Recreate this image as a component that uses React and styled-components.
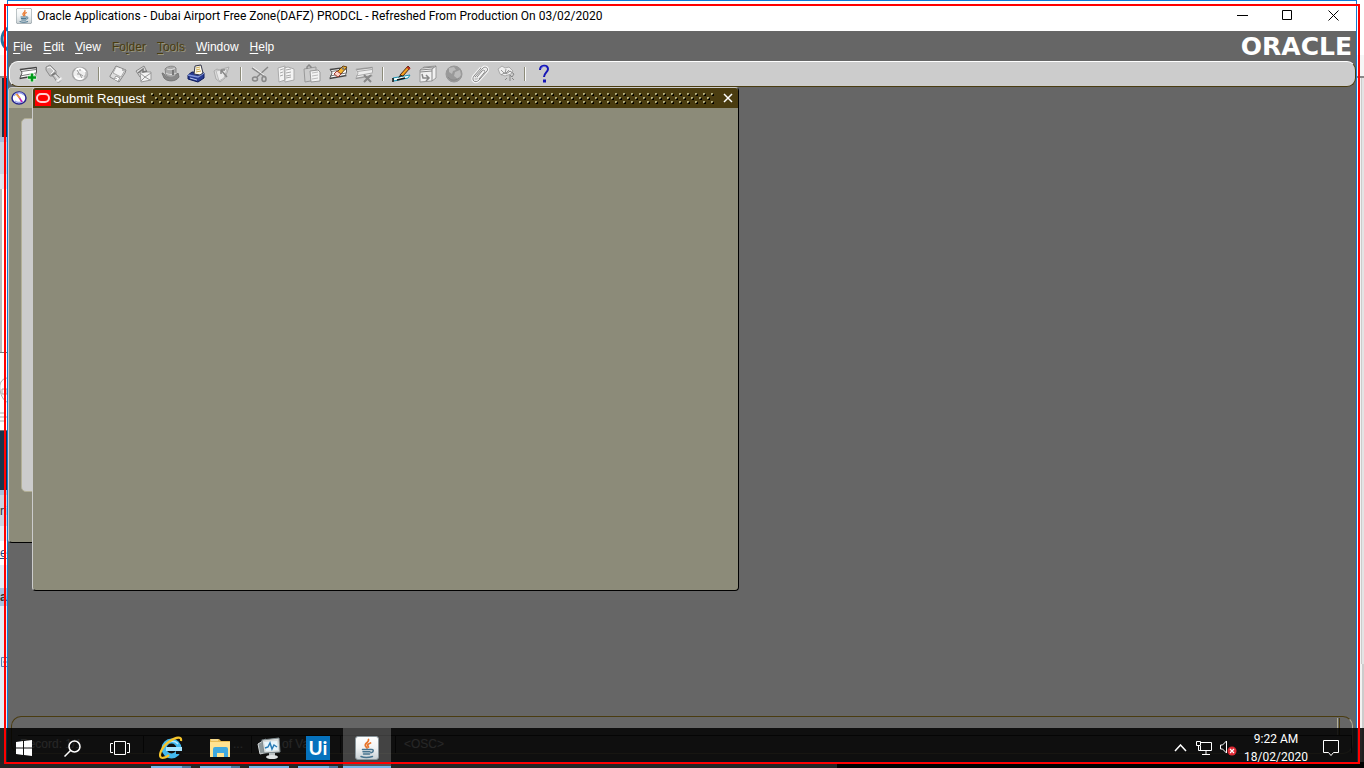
import React from "react";
import styled, { createGlobalStyle, css } from "styled-components";

const ui = '"Liberation Sans", Arial, sans-serif';
const system = 'Roboto, "Noto Sans", sans-serif';
const olive = "#4a3c10";

const GlobalStyle = createGlobalStyle`
  *, *::before, *::after { box-sizing: border-box; }
  body { margin: 0; overflow: hidden; background: #fff; font-family: ${ui}; }
  button { margin: 0; padding: 0; border: 0; background: none; font: inherit; color: inherit; }
  svg { display: block; flex: none; }
`;

const Desktop = styled.div`
  position: relative;
  display: grid;
  grid-template-columns: 7px minmax(0, 1fr) 7px;
  grid-template-rows: minmax(0, 1fr) 6px;
  height: 100vh;
  overflow: hidden;
`;

const Strip = styled.div`
  display: flex;
  flex-direction: column;
  overflow: hidden;
  background: #e4edf6;
`;

const Band = styled.div`
  flex: ${(p) => (p.$h ? `0 0 ${p.$h}px` : "1 1 0")};
  display: flex;
  align-items: center;
  overflow: hidden;
  background: ${(p) => p.$bg};
  color: ${(p) => p.$color || "#333"};
  font-size: 12px;
  line-height: 16px;
  white-space: nowrap;
  a { color: #1f4a80; }
`;

const PageFoot = styled.div`
  grid-column: 1 / -1;
  display: grid;
  grid-template-columns: 837fr 527fr;
  background: #000;
  &::before { content: ""; background: #f4f4f4; }
`;

const AppWindow = styled.main`
  display: flex;
  flex-direction: column;
  min-width: 0;
  border: 1px solid #0f7ad8;
  background: #666;
`;

const TitleBar = styled.header`
  flex: 0 0 30px;
  display: flex;
  align-items: center;
  padding-left: 8px;
  background: #fff;
`;

const TitleText = styled.h1`
  flex: 1;
  margin: 0 0 0 5px;
  font: 400 12px/16px ${system};
  color: #000;
  white-space: nowrap;
`;

const CaptionButton = styled.button`
  display: flex;
  align-items: center;
  justify-content: center;
  width: ${(p) => (p.$narrow ? 45 : 46)}px;
  height: 28px;
  align-self: flex-start;
`;

const MenuBar = styled.nav`
  flex: 0 0 30px;
  display: flex;
  align-items: center;
  padding: 2px 4px 0 5px;
`;

const MenuItem = styled.button`
  margin-right: 11px;
  font-size: 12px;
  line-height: 16px;
  color: #fff;
  u { text-underline-offset: 2px; }
  ${(p) =>
    p.$disabled &&
    css`
      color: ${olive};
      text-shadow: 1px 1px 0 #99957a;
    `}
`;

const Brand = styled.div`
  margin-left: auto;
  font: 700 25px/26px "DejaVu Sans", sans-serif;
  color: #fff;
`;

const ToolBar = styled.div`
  flex: 0 0 26px;
  display: flex;
  align-items: center;
  margin: 0 0 0 1px;
  padding-left: 5px;
  background: #ccc;
  border: 1px solid;
  border-color: #fff ${olive} ${olive} #fff;
  border-radius: 9px;
`;

const ToolButton = styled.button`
  display: flex;
  justify-content: center;
  width: 26px;
  height: 20px;
`;

const ToolDivider = styled.span`
  width: 2px;
  height: 14px;
  margin: 0 5px;
  background: linear-gradient(90deg, #8c8b79 50%, #f8f8f8 50%);
`;

const Canvas = styled.section`
  position: relative;
  flex: 1 1 0;
  min-height: 0;
  overflow: hidden;
`;

const FormWindow = styled.article`
  position: absolute;
  left: ${(p) => p.$left}px;
  top: 0;
  width: ${(p) => p.$width}px;
  height: ${(p) => p.$height}px;
  display: flex;
  flex-direction: column;
  overflow: hidden;
  background: #8c8b79;
  border: 1px solid;
  border-color: #ccc #000 #000 #ccc;
  border-radius: 4px;
`;

const FormHeader = styled.header`
  flex: 0 0 20px;
  display: flex;
  align-items: center;
  padding-left: 2px;
  background: ${(p) => (p.$active ? olive : "#b2af96")};
  color: #fff;
`;

const FormTitle = styled.h2`
  margin: 0 5px 0 2px;
  padding-top: 2px;
  font: 400 13px/18px ${ui};
  white-space: nowrap;
`;

const Grip = styled.svg`
  flex: 1 1 0;
  width: 0;
  height: 12px;
  margin-right: 4px;
`;

const CloseButton = styled.button`
  width: 20px;
  height: 20px;
  display: flex;
  align-items: center;
  justify-content: center;
`;

const NavPanel = styled.div`
  height: 374px;
  margin: 10px 0 0 12px;
  background: #ccc;
  border: 1px solid #b2af96;
  border-radius: 5px;
`;

const StatusBar = styled.footer`
  flex: 0 0 38px;
  display: flex;
  flex-direction: column;
  margin: 0 3px 7px;
  border: 1px solid;
  border-color: ${olive} #b2af96 #99957a ${olive};
  border-radius: 10px;
`;

const MessageLine = styled.div`
  flex: 0 0 19px;
  margin-left: 6px;
  border-bottom: 1px solid #222;
  display: flex;
  justify-content: flex-end;
  padding: 1px 12px 0 0;
  &::after {
    content: "";
    width: 3px;
    background: linear-gradient(90deg, #b2af96 1px, #666 1px 2px, ${olive} 2px);
  }
`;

const StatusFields = styled.div`
  flex: 1;
  display: grid;
  grid-template-columns: 132px 108px 89px 55px 1fr;
  font-size: 12px;
  line-height: 17px;
  color: #fff;
`;

const StatusField = styled.span`
  padding: 0 8px;
  text-align: ${(p) => (p.$end ? "right" : "left")};
  border-right: 1px solid #222;
  white-space: nowrap;
  overflow: hidden;
`;

const TaskBar = styled.footer`
  position: absolute;
  left: 0;
  right: 0;
  bottom: 0;
  display: flex;
  height: 40px;
  background: rgba(0, 0, 0, 0.85);
  color: #fff;
`;

const TaskButton = styled.button`
  position: relative;
  display: flex;
  align-items: center;
  justify-content: center;
  width: 48px;
  height: 40px;
  margin-right: ${(p) => (p.$app ? 1 : 0)}px;
  background: ${(p) => (p.$active ? "rgba(255,255,255,.22)" : "transparent")};
  ${(p) =>
    p.$line &&
    css`
      &::after {
        content: "";
        position: absolute;
        bottom: 0;
        left: ${p.$active ? 0 : 4}px;
        right: ${p.$active ? 0 : 4}px;
        height: 2px;
        background: ${p.$stack
          ? "linear-gradient(90deg, #76b9ed 31px, #4c7ba3 31px)"
          : "#76b9ed"};
      }
    `}
`;

const TaskApps = styled.div`
  display: flex;
  margin-left: 3px;
`;

const Tray = styled.div`
  display: flex;
  align-items: stretch;
  margin-left: auto;
`;

const TrayButton = styled.button`
  display: flex;
  align-items: center;
  justify-content: center;
  width: ${(p) => p.$w || 24}px;
`;

const Clock = styled.button`
  width: 72px;
  padding-bottom: 1px;
  font: 400 12px/18px ${system};
  text-align: center;
  white-space: nowrap;
  time { display: block; }
`;

const Outline = styled.div`
  position: absolute;
  inset: 4px;
  border: 2px solid #f00;
  pointer-events: none;
`;

function Java({ size }) {
  return (
    <svg width={size} height={size} viewBox="0 0 24 24">
      <defs>
        <linearGradient id="tile" x1="0" y1="0" x2="0" y2="1">
          <stop offset="0" stopColor="#fff" />
          <stop offset=".5" stopColor="#f0f3f4" />
          <stop offset="1" stopColor="#c8d0d4" />
        </linearGradient>
      </defs>
      <rect x=".5" y=".5" width="23" height="23" rx="2.5" fill="url(#tile)" stroke="#8b979d" />
      <g fill="none" strokeLinecap="round">
        <path d="M13.500 3.500c1 3-4.500 3.500-3 6.500l1.500 2M15.500 7c-3 1-3.500 2.300-2 4" stroke="#e8762c" strokeWidth="1.800" />
        <path d="M7.500 13.500h8M8 15.800h7M8.500 18h6M6 20.500c4 1.500 8 1 11.500 0M16 13.500c3-.5 3 2.500 0 3.300" stroke="#47748f" strokeWidth="1.500" />
      </g>
    </svg>
  );
}

const Svg = ({ children }) => (
  <svg width="20" height="20" viewBox="0 0 20 20" fill="none">
    {children}
  </svg>
);

const form = (dark) => (
  <>
    <path d="M2 5 19 3v9L1 15l2-5z" fill={dark ? "#fff" : "#eee"} />
    <path d="M2 5.500 18.500 3.500M1.500 14.500l17-3" stroke={dark ? "#444" : "#999"} strokeWidth="1.500" />
    <path d="M3 7.500 18 5.500M2 12l16-3" stroke={dark ? "#777" : "#aaa"} />
    <path d="M2 5l2 4-2 5M18.500 3v5l-1 4" stroke={dark ? "#555" : "#aaa"} />
  </>
);

const icons = {
  New: (<>{form(true)}<path d="M14 9v9M9.500 13.500h9" stroke="#d9f3da" strokeWidth="4.500" /><path d="M14 9.500v8M10 13.500h8" stroke="#009b1a" strokeWidth="2.500" /></>),
  Find: (<><path d="m2 3 4-2 6 6v3l5 5c0 2-2 4-4 3l-4-6H6L2 6z" fill="#c3c3c3" stroke="#8c8c8c" /><path d="m3 4 3-1 4 4-3 3M10 10l5 6" stroke="#f4f4f4" /><path d="m7 11 4-3 1 2-4 2z" fill="#777" /><path d="m12 17 2 1 4-3-1-2z" fill="#f7f7f7" stroke="#ddd" /></>),
  "Show Navigator": (<><ellipse cx="10" cy="10" rx="7.500" ry="6.500" fill="#eee" stroke="#a5a5a5" strokeWidth="1.500" /><path d="M6 6c3-3 8-1 9 2M5 12c1 3 5 4 8 2" stroke="#fff" strokeWidth="2" /><path d="m7 6 5 8M10 10l3 2M7 10h2M10 5v2" stroke="#999" /><path d="M14 13c2-1 3-3 2-5" stroke="#bbb" strokeWidth="2" /></>),
  Save: (<><path d="m2 12 6-10 10 4-1 3-6 9-9-5z" fill="#ddd" stroke="#888" /><path d="m8 3-3 6 8 4 4-7" fill="#f2f2f2" stroke="#aaa" /><path d="m6 15 2-3 4 2-2 3" fill="#fff" stroke="#999" /><path d="M14 6h2M8 14v1" stroke="#777" /></>),
  "Next Step": (<><path d="m2 7 8-5 3 6-7 5z" fill="#ddd" stroke="#888" /><path d="m6 8h11v8l-10 2z" fill="#f2f2f2" stroke="#999" /><path d="m6 9 5 4 6-4M7 17l4-4 5 3" stroke="#999" /><path d="m4 9 5-4v3l4-1" stroke="#777" strokeWidth="1.500" /></>),
  "Switch Responsibility": (<><path d="M2 9c2 0 3 2 4 4l9-1 3-3 1 4c-3 5-12 5-15 1z" fill="#888" stroke="#777" /><path d="M5 5c2-3 9-4 11-1v7c-2 3-8 3-10 0z" fill="#aaa" stroke="#888" /><path d="M6 9c3 2 7 2 10 0M7 5c3 1 5 1 8-1" stroke="#ddd" /><path d="M13 6v5" stroke="#777" strokeWidth="2" /></>),
  Print: (<><path d="m2 11 4-3 12 1v5l-6 4-10-3z" fill="#283b91" stroke="#0b1858" /><path d="m2 11 10 2 6-4" stroke="#8297db" strokeWidth="1.500" /><path d="m8 10 1-8 6-1 2 8-3 2z" fill="#fffbea" stroke="#33364b" /><path d="m10 4 4-1M10 6l4-1M10 8l5-1" stroke="#c9a850" /><path d="m4 14 7 2" stroke="#b8c9ef" /></>),
  "Close Form": (<><path d="m2 7 3-2 2 1 10-3-4 11-5 4-4-3z" fill="#ddd" stroke="#aaa" /><path d="m4 7 11-2-3 9-5 3z" fill="#e9e9e9" stroke="#bbb" /><path d="m9 6 6 7M9 6v4M9 6h4" stroke="#888" strokeWidth="1.500" /></>),
  Cut: (<><path d="m2 4 13 9M18 3 7 13" stroke="#888" strokeWidth="1.500" /><path d="m3 3 11 8" stroke="#eee" /><ellipse cx="5" cy="15" rx="2.500" ry="2" stroke="#888" strokeWidth="1.500" /><ellipse cx="14" cy="15" rx="2" ry="2.500" stroke="#888" strokeWidth="1.500" /></>),
  Copy: (<><path d="m2 4 7-2v14l-6 2zM8 4l4-1 6 2v11l-9 2z" fill="#f4f4f4" stroke="#aaa" /><path d="m4 6 3-1M4 9l3-1M4 12l3-1M10 6l5-1m-5 4 5-1m-5 4 5-1m-5 3 5-1" stroke="#aaa" /></>),
  Paste: (<><path d="m2 5 12-2v13L3 18z" fill="#ccc" stroke="#999" /><path d="M5 5V3l2-2 2 2v1" stroke="#888" strokeWidth="1.500" /><path d="m8 7 8-1 2 2v9l-9 1z" fill="#f3f3f3" stroke="#999" /><path d="m10 9 6-1m-6 4 6-1m-6 4 6-1" stroke="#bbb" /></>),
  "Clear Record": (<>{form(true)}<path d="m9 8 6-6 4 1-6 7z" fill="#f6b52e" stroke="#654116" /><path d="m6 10 3-3 4 3-3 3z" fill="#ffd5c8" stroke="#a23c32" /><path d="m14 4 2 1" stroke="#777" strokeWidth="2" /></>),
  Delete: (<>{form(false)}<path d="m10 11 7 7m0-7-7 7" stroke="#888" strokeWidth="2" /></>),
  "Edit Field": (<><path d="m1 14 17-3-2 3-14 3z" fill="#f2ffff" stroke="#1592b2" /><path d="m1 14v4M5 16l8-2" stroke="#111" strokeWidth="1.500" /><path d="m8 11 8-9 2 2-7 8z" fill="#f4a11f" stroke="#4e2910" /><path d="m15 3 3 2" stroke="#b72e25" strokeWidth="2" /><path d="m6 14 2-3 2 1z" fill="#222" /></>),
  Zoom: (<><path d="m2 6 4-3 12-1v12l-4 3-12 1z" fill="#f1f1f1" stroke="#999" /><path d="m2 6 12-1v12m0-12 4-3M5 4l11-1M2 8l12-1" stroke="#888" /><path d="m4 10 1 4h5m-2-3 3 3-3 3" stroke="#888" strokeWidth="1.500" /></>),
  Translations: (<><circle cx="10" cy="10" r="8" fill="#999" stroke="#999" /><path d="m5 4 5-1 2 3-3 1-1 3-3-2zm6 4 5-2 1 5-3 4-4-3z" fill="#bbb" /><path d="M4 13c3 4 7 4 11 1" stroke="#888" /></>),
  Attachments: (<><path d="m5 13 8-9c2-2 6 0 4 3l-8 9c-4 4-8 0-5-4l7-8m-4 9 5-6c2-2 4 0 2 2l-5 6" stroke="#f4f4f4" strokeWidth="3" /><path d="m5 13 8-9c2-2 6 0 4 3l-8 9c-4 4-8 0-5-4l7-8m-4 9 5-6c2-2 4 0 2 2l-5 6" stroke="#888" /></>),
  Folder: (<><path d="m2 5 4-3 3 2 4-1 4 4-2 3-6 2-5-2z" fill="#eee" stroke="#aaa" /><path d="m5 6 4 4 1-5m3 1-4 4m-4 1 5-3" stroke="#999" /><path d="m10 10 4-3 4 3-2 3-2-2v6m-3-3-2 2m7-2 2 2" stroke="#888" /></>),
  Help: (<><path d="M6 6c0-5 8-6 8-1 0 3-4 4-4 8" stroke="#1515b5" strokeWidth="2" /><path d="M9 17h3" stroke="#1515b5" strokeWidth="3" /><path d="M7 5c1-3 4-3 5-2" stroke="#777cf0" /></>),
};

const toolGroups = [
  ["New", "Find", "Show Navigator"],
  ["Save", "Next Step", "Switch Responsibility", "Print", "Close Form"],
  ["Cut", "Copy", "Paste", "Clear Record", "Delete"],
  ["Edit Field", "Zoom", "Translations", "Attachments", "Folder"],
  ["Help"],
];

const menus = [
  ["", "F", "ile"],
  ["", "E", "dit"],
  ["", "V", "iew"],
  ["Fo", "l", "der", true],
  ["", "T", "ools", true],
  ["", "W", "indow"],
  ["", "H", "elp"],
];

function Explorer() {
  return (
    <svg width="24" height="24" viewBox="0 0 24 24">
      <path d="M2 3h9l2 2h9v16H2z" fill="#e8bd55" />
      <path d="M2 6h20v15H2z" fill="#ffe391" />
      <path d="M3 4h7" stroke="#fff4c8" />
      <path d="M5 21v-8q0-2 2-2h11q2 0 2 2v8h-4v-4H9v4z" fill="#3fa9df" />
    </svg>
  );
}

function Browser() {
  return (
    <svg width="24" height="24" viewBox="0 0 24 24" fill="none">
      <circle cx="12.500" cy="12.500" r="7.500" stroke="#43b9ee" strokeWidth="5" />
      <path d="M7 13h16" stroke="#a7e5ff" strokeWidth="4" />
      <path d="M17 15h7v3h-7z" fill="#101010" />
      <path d="M6 10c3-6 10-6 13-2" stroke="#bdeaff" strokeWidth="1.500" />
      <path d="M3 22C-2 21 3 10 11 5c6-4 12-5 11 0M3 22c2 0 5-1 7-3" stroke="#f6c52b" strokeWidth="2.200" />
    </svg>
  );
}

function Monitor() {
  return (
    <svg width="24" height="24" viewBox="0 0 24 24">
      <path d="m1 8 8-5 2 13-8 2z" fill="#8c9699" stroke="#d0d4d5" />
      <path d="m5 4 17-2 1 14-16 1z" fill="#d9dddd" stroke="#7f8b8f" />
      <path d="m7 6 13-1 1 9-12 1z" fill="#e8f6fd" />
      <path d="m8 12 3-1 2-4 2 6 2-4 3 2" fill="none" stroke="#287bb6" strokeWidth="1.500" />
      <path d="M12 17h6v3h-6z" fill="#bbc1c3" />
      <ellipse cx="15" cy="21" rx="6" ry="2" fill="#dfe2e3" />
    </svg>
  );
}

function UiPath() {
  return (
    <svg width="24" height="24" viewBox="0 0 24 24">
      <path d="M0 0h24v24H0z" fill="#0672bd" />
      <text x="12" y="19" fill="#fff" fontFamily="Lato, sans-serif" fontSize="19" fontWeight="700" textAnchor="middle">Ui</text>
    </svg>
  );
}

const taskApps = [
  { name: "Internet Explorer", icon: <Browser />, stack: true },
  { name: "File Explorer", icon: <Explorer />, stack: true },
  { name: "Resource Monitor", icon: <Monitor /> },
  { name: "UiPath", icon: <UiPath />, stack: true },
  { name: "Oracle Applications", icon: <Java size={24} />, active: true },
];

function BrowserEdge() {
  return (
    <Strip>
      <Band $h={24} $bg="#fff" />
      <Band $h={31} $bg="#fff">
        <svg width="7" height="31" viewBox="0 0 7 31"><circle cx="15" cy="15" r="13" fill="none" stroke="#26739e" strokeWidth="3" /></svg>
      </Band>
      <Band $h={21} $bg="#f6f6f6" />
      <Band $h={2} $bg="#888" />
      <Band $h={59} $bg="linear-gradient(90deg, #aaa 2px, #18334a 2px)" />
      <Band $h={5} $bg="#a9c0dc" />
      <Band $h={32} $bg="#cbd5e2" />
      <Band $h={15} $bg="#e1e6ee" />
      <Band $h={163} $bg="linear-gradient(90deg, #bbb 2px, #fff 2px)" />
      <Band $h={1} $bg="#777" />
      <Band $h={77} $bg="#fff">
        <svg width="7" height="77" viewBox="0 0 7 77" fill="none" stroke="#aaa"><path d="M7 25C1 26-1 31 0 37s4 11 7 12M2 36h5v5H2zM0 60h5M0 64h7M0 68h6" /></svg>
      </Band>
      <Band $h={1} $bg="#777" />
      <Band $h={59} $bg="#18334a" />
      <Band $h={5} $bg="#a9c0dc" />
      <Band $h={31} $bg="#cbd5e2">ri</Band>
      <Band $h={15} $bg="#e4edf6" />
      <Band $h={24} $bg="#fff"><a href="#e">e</a></Band>
      <Band $h={23} $bg="#e4edf6" />
      <Band $h={18} $bg="#a8c4e0"><b>ai</b></Band>
      <Band $h={50} $bg="#e4edf6" />
      <Band $h={12} $bg="#e4edf6">
        <svg width="7" height="12" viewBox="0 0 7 12" fill="none" stroke="#557fae"><path d="M7 1.500H1.500v9H7M3 6h4" /></svg>
      </Band>
      <Band $bg="#e4edf6" />
    </Strip>
  );
}

export default function App() {
  return (
    <>
      <GlobalStyle />
      <Desktop>
        <BrowserEdge />
        <AppWindow>
          <TitleBar>
            <Java size={16} />
            <TitleText>Oracle Applications - Dubai Airport Free Zone(DAFZ) PRODCL - Refreshed From Production On 03/02/2020</TitleText>
            <CaptionButton aria-label="Minimize"><svg width="11" height="11"><path d="M0 5.500h11" stroke="#000" /></svg></CaptionButton>
            <CaptionButton $narrow aria-label="Maximize"><svg width="11" height="11"><path d="M.5.5h9v9h-9z" fill="none" stroke="#000" /></svg></CaptionButton>
            <CaptionButton aria-label="Close"><svg width="11" height="11"><path d="m.5.5 10 10m0-10-10 10" stroke="#000" /></svg></CaptionButton>
          </TitleBar>
          <MenuBar>
            {menus.map(([before, key, after, off]) => (
              <MenuItem key={key} $disabled={off} aria-disabled={off}>{before}<u>{key}</u>{after}</MenuItem>
            ))}
            <Brand>ORACLE</Brand>
          </MenuBar>
          <ToolBar role="toolbar">
            {toolGroups.map((group, i) => (
              <React.Fragment key={group[0]}>
                {i > 0 && <ToolDivider />}
                {group.map((name) => (
                  <ToolButton key={name} aria-label={name}><Svg>{icons[name]}</Svg></ToolButton>
                ))}
              </React.Fragment>
            ))}
          </ToolBar>
          <Canvas>
            <FormWindow $left={0} $width={620} $height={456}>
              <FormHeader>
                <svg width="17" height="16" viewBox="0 0 17 16" fill="none">
                  <ellipse cx="8" cy="8" rx="7" ry="6" fill="#fff" stroke="#25258c" strokeWidth="1.500" />
                  <path d="M3 6c2-4 7-4 10-1M4 11c2 2 6 2 8 0" stroke="#9ba5ed" strokeWidth="1.500" />
                  <path d="m6 4 5 8" stroke="#c51bb5" strokeWidth="1.500" />
                  <path d="m5 4 4 4" stroke="#eeb22a" strokeWidth="1.500" />
                </svg>
              </FormHeader>
              <NavPanel />
            </FormWindow>
            <FormWindow $left={24} $width={707} $height={504}>
              <FormHeader $active>
                <svg width="16" height="16" viewBox="0 0 16 16">
                  <path d="M0 0h16v16H0z" fill="#f00" />
                  <rect x="2" y="4" width="12" height="8" rx="4" fill="none" stroke="#ffd0d0" strokeWidth="2" />
                </svg>
                <FormTitle>Submit Request</FormTitle>
                <Grip aria-hidden="true">
                  <defs>
                    <pattern id="grip" width="8" height="8" patternUnits="userSpaceOnUse">
                      <path d="M1 2h2v2H1zM5 6h2v2H5z" fill="#000" />
                      <path d="M0 1h2v1H1v1H0zM4 5h2v1H5v1H4z" fill="#b2ad80" />
                      <path d="M1 2h1v1H1zM5 6h1v1H5z" fill="#77703f" />
                    </pattern>
                  </defs>
                  <rect width="100%" height="12" fill="url(#grip)" />
                </Grip>
                <CloseButton aria-label="Close Submit Request"><svg width="10" height="10"><path d="m1 1 8 8m0-8-8 8" stroke="#fff" strokeWidth="1.500" /></svg></CloseButton>
              </FormHeader>
            </FormWindow>
          </Canvas>
          <StatusBar>
            <MessageLine />
            <StatusFields>
              <StatusField>Record: 1/1</StatusField>
              <StatusField $end>...</StatusField>
              <StatusField>List of Va</StatusField>
              <StatusField />
              <StatusField>&lt;OSC&gt;</StatusField>
            </StatusFields>
          </StatusBar>
        </AppWindow>
        <Strip>
          <Band $h={55} $bg="#fff" />
          <Band $h={21} $bg="#f6f6f6" />
          <Band $h={2} $bg="#888" />
          <Band $h={586} $bg="linear-gradient(90deg, #f2f2f2 4px, #ccc 4px 5px, #e4e4e4 5px)" />
          <Band $bg="linear-gradient(90deg, #f2f2f2 5px, #ccc 5px)" />
        </Strip>
        <PageFoot />
        <TaskBar>
          <TaskButton aria-label="Start">
            <svg width="16" height="16" viewBox="0 0 16 16"><path d="m0 2 7-1v6.500H0zM8 1l8-1v7.500H8zM0 8.500h7V15l-7-1zM8 8.500h8V16l-8-1z" fill="#fff" /></svg>
          </TaskButton>
          <TaskButton aria-label="Search">
            <svg width="17" height="17" viewBox="0 0 17 17" fill="none" stroke="#fff" strokeWidth="1.500"><circle cx="10.500" cy="6.500" r="5.500" /><path d="M6.500 10.500.5 16.500" /></svg>
          </TaskButton>
          <TaskButton aria-label="Task View">
            <svg width="20" height="14" viewBox="0 0 20 14" fill="none" stroke="#fff"><path d="M4.500.5h11v13h-11zM3 2.500H.5v9H3M17 2.500h2.500v9H17" /></svg>
          </TaskButton>
          <TaskApps>
            {taskApps.map((a) => (
              <TaskButton key={a.name} aria-label={a.name} $app $line $stack={a.stack} $active={a.active}>{a.icon}</TaskButton>
            ))}
          </TaskApps>
          <Tray>
            <TrayButton aria-label="Show hidden icons"><svg width="13" height="8" fill="none" stroke="#fff" strokeWidth="1.500"><path d="m1 7 5.500-6L12 7" /></svg></TrayButton>
            <TrayButton aria-label="Network">
              <svg width="16" height="14" viewBox="0 0 16 14" fill="none" stroke="#fff"><path d="M5 1.500h10.500v8H4.500V5M.5.5h4v4h-4zM2.500 5v4.500H5M10 10v3M6 13.500h8" /></svg>
            </TrayButton>
            <TrayButton aria-label="Volume">
              <svg width="17" height="16" viewBox="0 0 17 16" fill="none"><path d="M.5 5h2l4-4v12l-4-4h-2z" stroke="#fff" /><circle cx="12" cy="11" r="4.500" fill="#df2a35" /><path d="m10 9 4 4m0-4-4 4" stroke="#fff" strokeWidth="1.200" /></svg>
            </TrayButton>
            <Clock aria-label="Clock"><time>9:22 AM</time><time>18/02/2020</time></Clock>
            <TrayButton $w={38} aria-label="Notifications">
              <svg width="16" height="16" viewBox="0 0 16 16" fill="none" stroke="#fff"><path d="M.5.500h15v12H10.500l-2.500 3-2.500-3h-5z" /></svg>
            </TrayButton>
            <TrayButton $w={14} aria-label="Show desktop" />
          </Tray>
        </TaskBar>
        <Outline />
      </Desktop>
    </>
  );
}
